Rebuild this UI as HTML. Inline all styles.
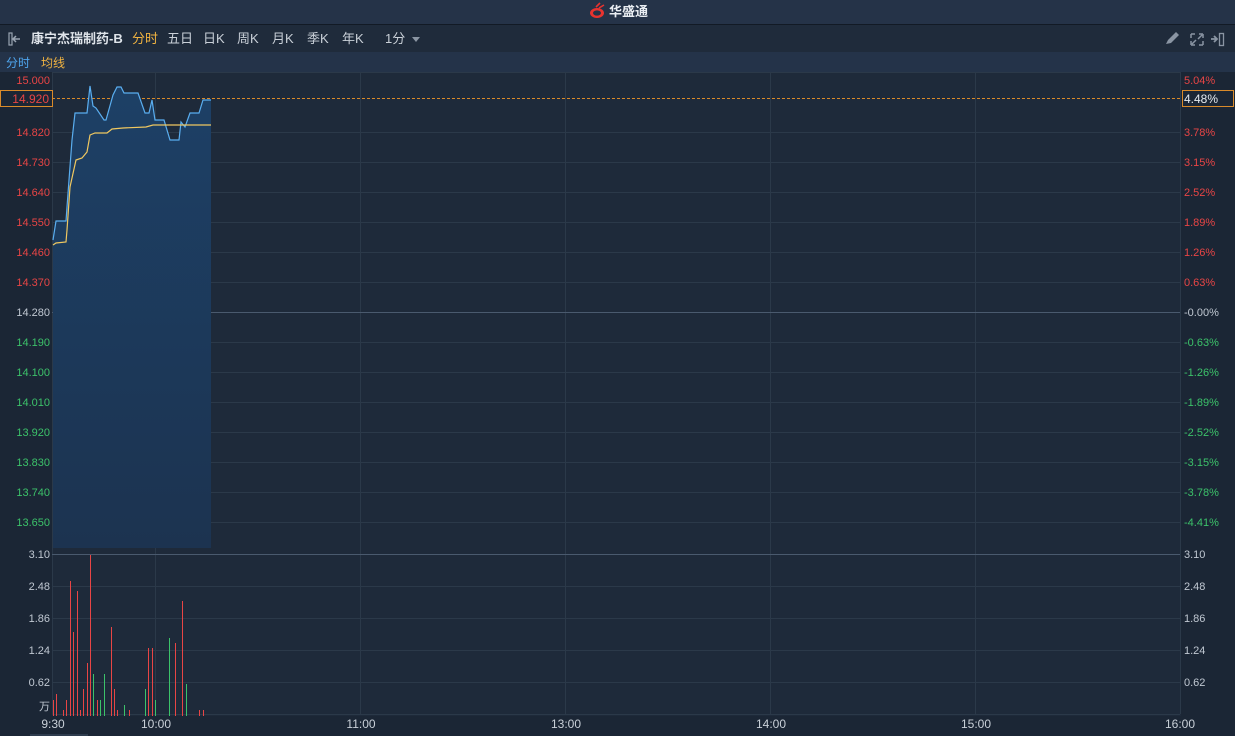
<!DOCTYPE html><html><head><meta charset="utf-8"><style>
body{margin:0;width:1235px;height:736px;overflow:hidden;background:#1d2838;font-family:"Liberation Sans","Noto Sans CJK SC",sans-serif}
svg{display:block}
text{font-family:"Liberation Sans","Noto Sans CJK SC",sans-serif}
</style></head><body>
<svg width="1235" height="736" xmlns="http://www.w3.org/2000/svg">
<rect x="0" y="0" width="1235" height="736" fill="#1e2a3a"/>
<rect x="0" y="0" width="1235" height="24" fill="#253348"/>
<rect x="0" y="24" width="1235" height="1" fill="#121a25"/>
<rect x="0" y="25" width="1235" height="27" fill="#1f2b3b"/>
<rect x="0" y="52" width="1235" height="20" fill="#243349"/>
<rect x="0" y="72" width="52" height="664" fill="#1b2635"/>
<rect x="1181" y="72" width="54" height="664" fill="#1b2635"/>
<!-- logo -->
<path d="M590 13a7 5 0 1 0 14 0a7 5 0 1 0 -14 0z M593 13a4 2.6 0 1 0 8 0a4 2.6 0 1 0 -8 0z" fill="#e8332f" fill-rule="evenodd"/>
<path d="M596 7l4 -4M599 8l5 -3" stroke="#e8332f" stroke-width="1.6"/>
<text x="609" y="16" fill="#e9edf2" font-size="13" font-weight="bold">华盛通</text>
<!-- toolbar -->
<rect x="9" y="33" width="3" height="12" fill="none" stroke="#9aa5b2" stroke-width="1.2"/>
<path d="M14 39h6M16 36l-3 3l3 3" stroke="#9aa5b2" stroke-width="1.5" fill="none"/>
<text x="31" y="43" fill="#dfe4ea" font-size="13" font-weight="bold">康宁杰瑞制药-B</text>
<text x="132" y="43" fill="#f0b341" font-size="13">分时</text>
<g fill="#c9d0d8" font-size="13"><text x="167" y="43">五日</text><text x="203" y="43">日K</text><text x="237" y="43">周K</text><text x="272" y="43">月K</text><text x="307" y="43">季K</text><text x="342" y="43">年K</text><text x="385" y="43">1分</text></g>
<path d="M412 37h8l-4 5z" fill="#8a95a3"/>
<path d="M1166 44l2 -4l8 -8l3 3l-8 8z" fill="#8a95a3"/>
<path d="M1191 34h4M1191 34v4M1203 34h-4M1203 34v4M1191 45h4M1191 45v-4M1203 45h-4M1203 45v-4M1192 44l4 -4M1202 35l-4 4" stroke="#8a95a3" stroke-width="1.5" fill="none"/>
<path d="M1211 39h5M1214 36l3 3l-3 3" stroke="#8a95a3" stroke-width="1.8" fill="none"/>
<rect x="1219.5" y="33.5" width="4" height="12" fill="none" stroke="#8a95a3" stroke-width="1.3"/>
<text x="6" y="67" fill="#4fa6ee" font-size="12">分时</text>
<text x="41" y="67" fill="#f0b341" font-size="12">均线</text>
<!-- grid -->
<g stroke="#2b3949" stroke-width="1">
<path d="M52 72.5H1180M52 132.5H1180M52 162.5H1180M52 192.5H1180M52 222.5H1180M52 252.5H1180M52 282.5H1180M52 342.5H1180M52 372.5H1180M52 402.5H1180M52 432.5H1180M52 462.5H1180M52 492.5H1180M52 522.5H1180M52 586.5H1180M52 618.5H1180M52 650.5H1180M52 682.5H1180M52 714.5H1180"/>
<path d="M155.5 72V714M360.5 72V714M565.5 72V714M770.5 72V714M975.5 72V714M52.5 72V714M1180.5 72V714"/>
</g>
<path d="M52 312.5H1180M52 554.5H1180" stroke="#4a5a6e" stroke-width="1"/>
<path d="M52 98.5H1180" stroke="#d98a2a" stroke-width="1" stroke-dasharray="3,2"/>
<defs><linearGradient id="g" x1="0" y1="0" x2="0" y2="1"><stop offset="0" stop-color="#1d4066"/><stop offset="1" stop-color="#1c3350"/></linearGradient></defs>
<path d="M53 240L56 221L66 221L67 207L69 180L72 140L75 113L87 113L90 86L93 106L96 108L104 120L106 120L113 95L117 87L121 87L124 93L138 93L145 113L149 113L152 100L155 120L164 120L170 140L179 140L181 122L185 127L190 113L199 113L203 100L211 100L211 548L53 548Z" fill="url(#g)"/>
<polyline points="53,240 56,221 66,221 67,207 69,180 72,140 75,113 87,113 90,86 93,106 96,108 104,120 106,120 113,95 117,87 121,87 124,93 138,93 145,113 149,113 152,100 155,120 164,120 170,140 179,140 181,122 185,127 190,113 199,113 203,100 211,100" fill="none" stroke="#5aaef0" stroke-width="1.2"/>
<polyline points="53,245 56,243 66,242 67,230 70,187 76,160 82,158 87,152 90,135 95,133 107,133 112,129 123,128 146,127 153,125 172,125 211,125" fill="none" stroke="#f0c860" stroke-width="1.2"/>
<!-- left labels -->
<g font-size="11" text-anchor="end" fill="#e84545">
<text x="50" y="84">15.000</text><text x="50" y="136">14.820</text><text x="50" y="166">14.730</text><text x="50" y="196">14.640</text><text x="50" y="226">14.550</text><text x="50" y="256">14.460</text><text x="50" y="286">14.370</text>
</g>
<text x="50" y="316" font-size="11" text-anchor="end" fill="#c0c8d2">14.280</text>
<g font-size="11" text-anchor="end" fill="#3cc26a">
<text x="50" y="346">14.190</text><text x="50" y="376">14.100</text><text x="50" y="406">14.010</text><text x="50" y="436">13.920</text><text x="50" y="466">13.830</text><text x="50" y="496">13.740</text><text x="50" y="526">13.650</text>
</g>
<rect x="0.5" y="90.5" width="52" height="16" fill="#1b2635" stroke="#d98a2a"/>
<text x="49" y="103" font-size="12" text-anchor="end" fill="#e84545">14.920</text>
<!-- right labels -->
<g font-size="11" fill="#e84545">
<text x="1184" y="84">5.04%</text><text x="1184" y="136">3.78%</text><text x="1184" y="166">3.15%</text><text x="1184" y="196">2.52%</text><text x="1184" y="226">1.89%</text><text x="1184" y="256">1.26%</text><text x="1184" y="286">0.63%</text>
</g>
<text x="1184" y="316" font-size="11" fill="#c0c8d2">-0.00%</text>
<g font-size="11" fill="#3cc26a">
<text x="1184" y="346">-0.63%</text><text x="1184" y="376">-1.26%</text><text x="1184" y="406">-1.89%</text><text x="1184" y="436">-2.52%</text><text x="1184" y="466">-3.15%</text><text x="1184" y="496">-3.78%</text><text x="1184" y="526">-4.41%</text>
</g>
<rect x="1182.5" y="90.5" width="51" height="16" fill="#1b2635" stroke="#d98a2a"/>
<text x="1184" y="103" font-size="12" fill="#e6ebf0">4.48%</text>
<!-- volume labels -->
<g font-size="11" fill="#c0c8d2">
<g text-anchor="end"><text x="50" y="558">3.10</text><text x="50" y="590">2.48</text><text x="50" y="622">1.86</text><text x="50" y="654">1.24</text><text x="50" y="686">0.62</text><text x="50" y="710">万</text></g>
<text x="1184" y="558">3.10</text><text x="1184" y="590">2.48</text><text x="1184" y="622">1.86</text><text x="1184" y="654">1.24</text><text x="1184" y="686">0.62</text>
</g>
<!-- volume bars -->
<g stroke-width="1" shape-rendering="crispEdges">
<g stroke="#e84545">
<path d="M53.5 716V700M56.5 716V694M63.5 716V710M66.5 716V700M70.5 716V581M73.5 716V632M77.5 716V591M80.5 716V710M83.5 716V689M87.5 716V663M90.5 716V555M97.5 716V700M111.5 716V627M114.5 716V689M117.5 716V710M129.5 716V710M148.5 716V648M152.5 716V648M175.5 716V643M182.5 716V601M199.5 716V710M203.5 716V710"/>
</g>
<g stroke="#3cc26a">
<path d="M93.5 716V674M100.5 716V700M104.5 716V674M124.5 716V705M145.5 716V689M155.5 716V700M169.5 716V638M186.5 716V684"/>
</g>
</g>
<!-- time axis -->
<rect x="0" y="716" width="1235" height="20" fill="#1b2635"/>
<rect x="30" y="734" width="58" height="2" fill="#2e3c4e"/>
<g font-size="12" fill="#c9d0d8" text-anchor="middle">
<text x="53" y="728">9:30</text><text x="156" y="728">10:00</text><text x="361" y="728">11:00</text><text x="566" y="728">13:00</text><text x="771" y="728">14:00</text><text x="976" y="728">15:00</text><text x="1180" y="728">16:00</text>
</g>
</svg>
</body></html>
